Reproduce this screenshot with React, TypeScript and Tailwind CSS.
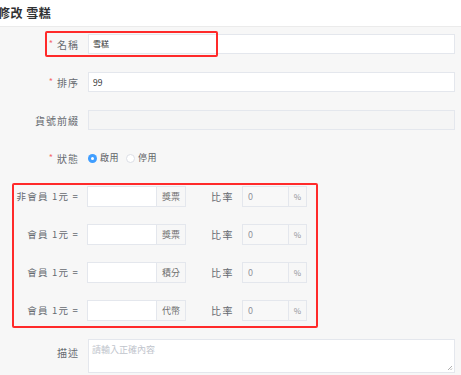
import React from "react";

const font = { fontFamily: '"Noto Sans CJK TC", "Liberation Sans", sans-serif' };

function Label({ text, req }: { text: string; req?: boolean }) {
  return (
    <div className="w-[80px] shrink-0 flex items-center justify-end pr-[1px] text-[10px] text-[#666a70] tracking-[1px]">
      {req && <span className="text-[#f56c6c] mr-[4px] text-[9px] tracking-normal">*</span>}
      {text}
    </div>
  );
}

function RateRow({ label, unit }: { label: string; unit: string }) {
  return (
    <div className="flex items-center h-[21px]">
      <div className="w-[80px] shrink-0 text-right pr-[1px] text-[9.5px] text-[#666a70] whitespace-nowrap tracking-[1.2px]">
        {label}
      </div>
      <div className="ml-[7px] flex h-[21px]">
        <div className="w-[70px] bg-white border border-[#e4e7ed]" />
        <div className="w-[29px] border border-l-0 border-[#e4e7ed] bg-[#f7f7f7] flex items-center justify-center text-[9px] text-[#707070]">
          {unit}
        </div>
      </div>
      <div className="ml-[25px] text-[10px] text-[#666a70] tracking-[1.5px]">比率</div>
      <div className="ml-[8px] flex h-[21px]">
        <div className="w-[47px] bg-[#f8f8f8] border border-[#e4e7ed] flex items-center pl-[5px] text-[9px] text-[#909399]">0</div>
        <div className="w-[18px] border border-l-0 border-[#e4e7ed] bg-[#f7f7f7] flex items-center justify-center text-[8px] text-[#909399]">%</div>
      </div>
    </div>
  );
}

export default function App() {
  return (
    <div className="w-[461px] h-[375px] overflow-hidden bg-[#f7f7f7] relative" style={font}>
      <div className="h-[27px] bg-white border-b border-[#ebebeb] flex items-center">
        <div className="ml-[-2px] text-[12px] font-bold text-[#303133] tracking-[0.5px]">修改 雪糕</div>
      </div>
      <div className="pt-[7px] flex flex-col gap-[18px]">
        <div className="flex items-center h-[20px]">
          <Label text="名稱" req />
          <div className="ml-[8px] w-[367px] h-[20px] bg-white border border-[#e4e7ed] flex items-center pl-[4px] text-[8px] text-[#303133]">雪糕</div>
        </div>
        <div className="flex items-center h-[20px]">
          <Label text="排序" req />
          <div className="ml-[8px] w-[367px] h-[20px] bg-white border border-[#e4e7ed] flex items-center pl-[4px] text-[8.5px] text-[#303133]">99</div>
        </div>
        <div className="flex items-center h-[20px]">
          <Label text="貨號前綴" />
          <div className="ml-[8px] w-[367px] h-[20px] bg-[#f5f5f5] border border-[#e4e7ed]" />
        </div>
        <div className="flex items-center h-[20px]">
          <Label text="狀態" req />
          <div className="ml-[8px] flex items-center text-[9px] text-[#606266]">
            <span className="w-[9px] h-[9px] rounded-full bg-[#409eff] flex items-center justify-center">
              <span className="w-[3px] h-[3px] rounded-full bg-white" />
            </span>
            <span className="ml-[3px] tracking-[0.5px]">啟用</span>
            <span className="ml-[7px] w-[9px] h-[9px] rounded-full bg-white border border-[#dcdfe6]" />
            <span className="ml-[3px] tracking-[0.5px]">停用</span>
          </div>
        </div>
        <div className="flex flex-col gap-[17px]">
          <RateRow label="非會員 1元 =" unit="獎票" />
          <RateRow label="會員 1元 =" unit="獎票" />
          <RateRow label="會員 1元 =" unit="積分" />
          <RateRow label="會員 1元 =" unit="代幣" />
        </div>
        <div className="flex items-start">
          <div className="w-[80px] shrink-0 text-right pr-[1px] pt-[6px] text-[10px] text-[#666a70] tracking-[1px]">描述</div>
          <div className="ml-[8px] w-[367px] h-[34px] bg-white border border-[#e4e7ed] relative pl-[3px] pt-[3px] text-[9px] text-[#c0c4cc]">
            請輸入正確內容
            <svg className="absolute right-[1px] bottom-[1px]" width="6" height="6" viewBox="0 0 6 6">
              <path d="M1 5L5 1M3.5 5L5 3.5" stroke="#999" strokeWidth="0.8" />
            </svg>
          </div>
        </div>
      </div>
      <div className="absolute left-[45px] top-[31px] w-[173px] h-[26px] border-2 border-[#ff2a2a] rounded-[2px] pointer-events-none" />
      <div className="absolute left-[12px] top-[183px] w-[306px] h-[145px] border-2 border-[#ff2a2a] rounded-[2px] pointer-events-none" />
    </div>
  );
}
